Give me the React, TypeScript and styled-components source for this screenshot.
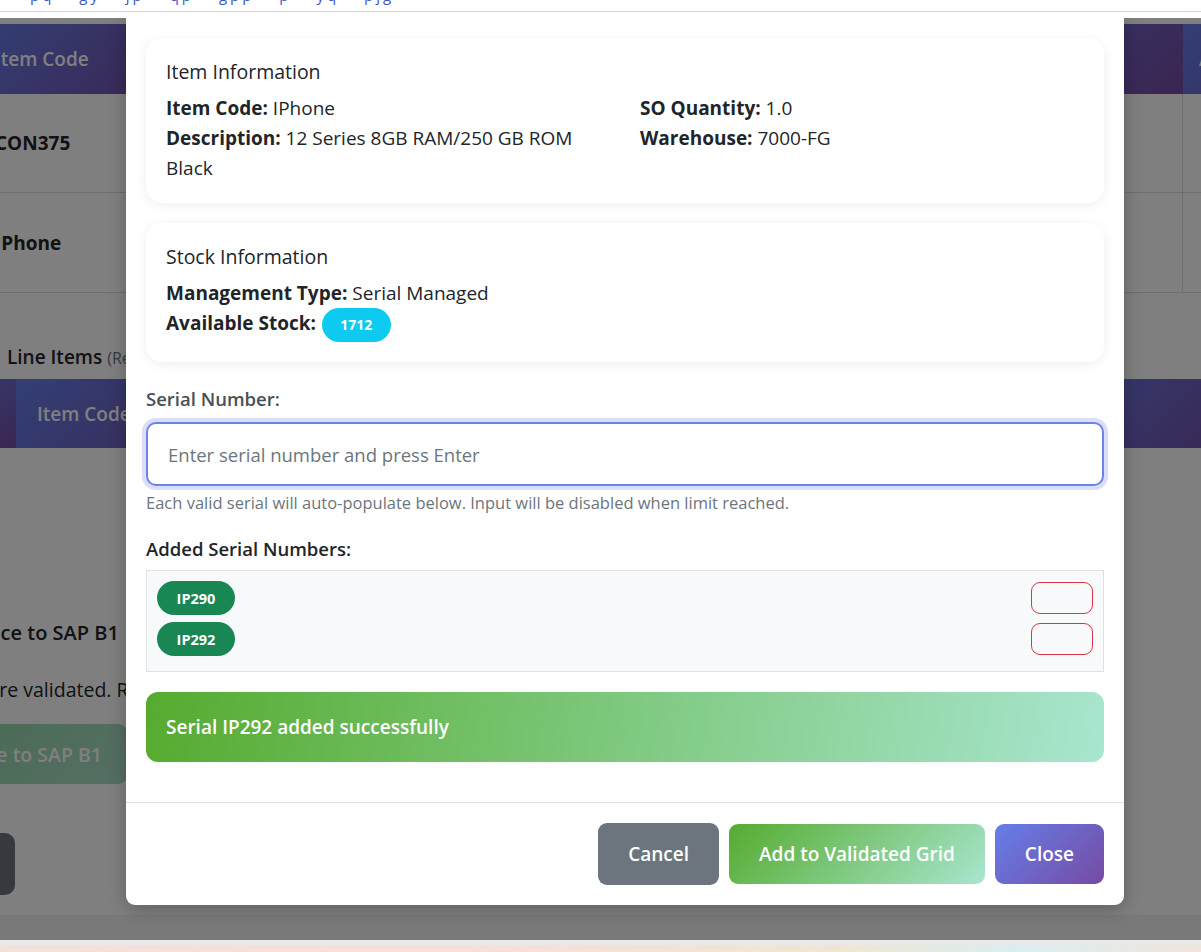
import React from 'react';
import styled, { createGlobalStyle } from 'styled-components';

const GlobalStyle = createGlobalStyle`
  html, body {
    margin: 0;
    padding: 0;
  }
  body {
    font-family: "Open Sans", "Noto Sans", "Liberation Sans", sans-serif;
    color: #212529;
    background: #fff;
    overflow: hidden;
  }
  * {
    box-sizing: border-box;
  }
`;

const Screen = styled.div`
  width: 1201px;
  height: 952px;
  display: flex;
  flex-direction: column;
  overflow: hidden;
`;

const BrowserBar = styled.div`
  flex: none;
  height: 18px;
  background: #fff;
`;

const BarTabs = styled.div`
  height: 12px;
  overflow: hidden;
  border-bottom: 1px solid #d4d4d4;
  padding-left: 30px;
  color: #3b57c4;
  font-size: 15px;
  line-height: 15px;
`;

const BarText = styled.div`
  margin-top: -12px;
  letter-spacing: 3px;
  word-spacing: 18px;
`;

const Viewport = styled.div`
  flex: none;
  height: 922px;
  position: relative;
  overflow: hidden;
  background: #fff;
`;

const Taskbar = styled.div`
  flex: 1;
  border-top: 5px solid #e9e9e9;
  background: linear-gradient(90deg, #f3e2d9, #f6e0da 40%, #efe6d2 70%, #d9eef0 85%, #f2e4dc);
`;

/* page behind the dialog */

const Page = styled.div`
  padding-top: 6px;
  height: 100%;
  display: flex;
  flex-direction: column;
`;

const Grid = styled.div<{ $cols: string; $shift: number }>`
  display: grid;
  grid-template-columns: ${p => p.$cols};
  margin-left: ${p => p.$shift}px;
  width: max-content;
`;

const HeadCell = styled.div<{ $h: number; $pad?: number }>`
  height: ${p => p.$h}px;
  background: linear-gradient(135deg, #667eea 0%, #764ba2 100%);
  color: #fff;
  font-size: 19px;
  font-weight: 600;
  display: flex;
  align-items: center;
  padding-left: ${p => p.$pad ?? 16}px;
  white-space: nowrap;
`;

const BodyCell = styled.div<{ $h: number }>`
  height: ${p => p.$h}px;
  border-bottom: 1px solid #dcdcdc;
  border-right: 1px solid #dcdcdc;
  display: flex;
  align-items: center;
  padding-left: 16px;
  font-size: 19px;
  font-weight: 700;
`;

const SectionTitle = styled.div`
  margin: 50px 0 7px 7px;
  font-size: 19px;
  font-weight: 600;
  line-height: 28px;
  white-space: nowrap;
`;

const Muted = styled.span`
  font-size: 16px;
  font-weight: 400;
  color: #6c757d;
`;

const EmptyBody = styled.div`
  height: 170px;
`;

const Submit = styled.div`
  margin-left: -94px;
  display: flex;
  flex-direction: column;
  align-items: flex-start;
`;

const SubmitTitle = styled.div`
  font-size: 20px;
  font-weight: 600;
  line-height: 30px;
  white-space: nowrap;
`;

const SubmitText = styled.div`
  margin-top: 27px;
  font-size: 19.5px;
  line-height: 30px;
  white-space: nowrap;
`;

const PageButton = styled.div<{ $tone: 'submit' | 'back' }>`
  margin-top: ${p => (p.$tone === 'submit' ? 19 : 49)}px;
  height: ${p => (p.$tone === 'submit' ? 60 : 62)}px;
  width: ${p => (p.$tone === 'submit' ? 222 : 109)}px;
  border-radius: 10px;
  display: flex;
  align-items: center;
  justify-content: flex-end;
  padding-right: 26px;
  font-size: 19.5px;
  font-weight: 600;
  color: #fff;
  white-space: nowrap;
  background: ${p =>
    p.$tone === 'submit'
      ? 'linear-gradient(135deg, #7dcf8f 0%, #9dd8c0 100%)'
      : '#6c757d'};
  opacity: ${p => (p.$tone === 'submit' ? 0.85 : 1)};
`;

const PageFooter = styled.div`
  margin-top: auto;
  height: 25px;
  background: #f3f3f3;
`;

const Backdrop = styled.div`
  position: absolute;
  inset: 0;
  background: rgba(0, 0, 0, 0.5);
`;

/* dialog */

const DialogLayer = styled.div`
  position: absolute;
  inset: 0;
  padding-left: 126px;
  display: flex;
  align-items: flex-start;
`;

const Dialog = styled.div`
  width: 998px;
  background: #fff;
  border-radius: 0 0 9px 9px;
  box-shadow: 0 4px 18px rgba(0, 0, 0, 0.25);
  display: flex;
  flex-direction: column;
`;

const DialogBody = styled.div`
  padding: 20px 20px 20px;
  display: flex;
  flex-direction: column;
`;

const Card = styled.div`
  background: #fff;
  border-radius: 16px;
  box-shadow: 0 2px 12px rgba(0, 0, 0, 0.07);
  padding: 20px;
  margin-bottom: 20px;
`;

const CardTitle = styled.div`
  font-size: 19.5px;
  font-weight: 500;
  line-height: 27px;
  margin-bottom: 8px;
`;

const InfoGrid = styled.div`
  display: grid;
  grid-template-columns: 440px 1fr;
  column-gap: 34px;
`;

const InfoLine = styled.div`
  font-size: 19px;
  line-height: 30px;
  min-height: 30px;
`;

const Label = styled.b`
  font-weight: 700;
`;

const Badge = styled.span`
  display: inline-flex;
  align-items: center;
  justify-content: center;
  width: 69px;
  height: 34px;
  border-radius: 17px;
  background: #0dcaf0;
  color: #fff;
  font-size: 14px;
  font-weight: 700;
  vertical-align: middle;
  margin-left: 1px;
`;

const FieldLabel = styled.div`
  font-size: 18.5px;
  font-weight: 600;
  line-height: 27px;
  color: #495057;
  margin: 3px 0 10px;
`;

const SectionLabel = styled(FieldLabel)`
  color: #212529;
  margin: 20px 0 8px;
`;

const SerialInput = styled.input`
  width: 100%;
  height: 64px;
  border: 2px solid #6f83e6;
  border-radius: 10px;
  box-shadow: 0 0 0 4px #d9defa;
  padding: 0 20px;
  font-family: inherit;
  font-size: 18.5px;
  color: #212529;
  outline: none;
  &::placeholder {
    color: #6c757d;
  }
`;

const HelpText = styled.div`
  margin-top: 5px;
  font-size: 16.5px;
  line-height: 24px;
  color: #6c757d;
`;

const SerialBox = styled.div`
  background: #f8f9fa;
  border: 1px solid #dee2e6;
  padding: 10px 10px 15px;
  display: flex;
  flex-direction: column;
  gap: 7px;
`;

const SerialRow = styled.div`
  display: flex;
  align-items: center;
  justify-content: space-between;
  height: 34px;
`;

const SerialChip = styled.span`
  display: inline-flex;
  align-items: center;
  justify-content: center;
  width: 78px;
  height: 34px;
  border-radius: 17px;
  background: #198754;
  color: #fff;
  font-size: 14.5px;
  font-weight: 700;
`;

const RemoveButton = styled.button`
  width: 62px;
  height: 32px;
  border: 1px solid #dc3545;
  border-radius: 9px;
  background: transparent;
  padding: 0;
`;

const SuccessAlert = styled.div`
  margin-top: 20px;
  margin-bottom: 20px;
  height: 70px;
  border-radius: 12px;
  background: linear-gradient(100deg, #56ab2f 0%, #a8e6cf 100%);
  color: #fff;
  font-size: 19px;
  font-weight: 600;
  display: flex;
  align-items: center;
  padding-left: 20px;
`;

const DialogFooter = styled.div`
  border-top: 1px solid #dee2e6;
  padding: 20px 20px 20px;
  display: flex;
  justify-content: flex-end;
  align-items: center;
  gap: 10px;
`;

const ActionButton = styled.button<{ $variant: 'secondary' | 'success' | 'primary' }>`
  height: ${p => (p.$variant === 'secondary' ? 62 : 60)}px;
  padding: 0 30px;
  border: none;
  border-radius: 9px;
  font-family: inherit;
  font-size: 19px;
  font-weight: 600;
  color: #fff;
  background: ${p =>
    p.$variant === 'secondary'
      ? '#6c757d'
      : p.$variant === 'success'
      ? 'linear-gradient(135deg, #56ab2f 0%, #a8e6cf 100%)'
      : 'linear-gradient(135deg, #667eea 0%, #764ba2 100%)'};
`;

const tableCols = '200px 250px 250px 250px 254px 200px';
const table2Cols = '60px 250px 250px 250px 250px 250px';

export default function App() {
  return (
    <Screen>
      <GlobalStyle />
      <BrowserBar>
        <BarTabs>
          <BarText>pq gy jp qp gpp p yq pjg</BarText>
        </BarTabs>
      </BrowserBar>

      <Viewport>
        <Page>
          <Grid $cols={tableCols} $shift={-21}>
            {['Item Code', 'Description', 'Quantity', 'Warehouse', 'Status', 'Action'].map(h => (
              <HeadCell key={h} $h={70}>{h}</HeadCell>
            ))}
            {['CON375', '', '', '', '', ''].map((c, i) => (
              <BodyCell key={'a' + i} $h={99}>{c}</BodyCell>
            ))}
            {['IPhone', '', '', '', '', ''].map((c, i) => (
              <BodyCell key={'b' + i} $h={100}>{c}</BodyCell>
            ))}
          </Grid>

          <SectionTitle>
            Line Items <Muted>(Ready)</Muted>
          </SectionTitle>

          <Grid $cols={table2Cols} $shift={-44}>
            {['#', 'Item Code', 'Description', 'Quantity', 'Serials', 'Action'].map(h => (
              <HeadCell key={h} $h={69} $pad={h === '#' ? 16 : 21}>{h}</HeadCell>
            ))}
          </Grid>
          <EmptyBody />

          <Submit>
            <SubmitTitle>Post Invoice to SAP B1</SubmitTitle>
            <SubmitText>All items are validated. Ready</SubmitText>
            <PageButton $tone="submit">Post Invoice to SAP B1</PageButton>
            <PageButton $tone="back">Back</PageButton>
          </Submit>

          <PageFooter />
        </Page>

        <Backdrop />

        <DialogLayer>
          <Dialog>
            <DialogBody>
              <Card>
                <CardTitle>Item Information</CardTitle>
                <InfoGrid>
                  <div>
                    <InfoLine><Label>Item Code:</Label> IPhone</InfoLine>
                    <InfoLine><Label>Description:</Label> 12 Series 8GB RAM/250 GB ROM Black</InfoLine>
                  </div>
                  <div>
                    <InfoLine><Label>SO Quantity:</Label> 1.0</InfoLine>
                    <InfoLine><Label>Warehouse:</Label> 7000-FG</InfoLine>
                  </div>
                </InfoGrid>
              </Card>

              <Card>
                <CardTitle>Stock Information</CardTitle>
                <InfoLine><Label>Management Type:</Label> Serial Managed</InfoLine>
                <InfoLine><Label>Available Stock:</Label> <Badge>1712</Badge></InfoLine>
              </Card>

              <FieldLabel>Serial Number:</FieldLabel>
              <SerialInput placeholder="Enter serial number and press Enter" />
              <HelpText>
                Each valid serial will auto-populate below. Input will be disabled when limit reached.
              </HelpText>

              <SectionLabel>Added Serial Numbers:</SectionLabel>
              <SerialBox>
                {['IP290', 'IP292'].map(s => (
                  <SerialRow key={s}>
                    <SerialChip>{s}</SerialChip>
                    <RemoveButton aria-label={`Remove ${s}`} />
                  </SerialRow>
                ))}
              </SerialBox>

              <SuccessAlert>Serial IP292 added successfully</SuccessAlert>
            </DialogBody>

            <DialogFooter>
              <ActionButton $variant="secondary">Cancel</ActionButton>
              <ActionButton $variant="success">Add to Validated Grid</ActionButton>
              <ActionButton $variant="primary">Close</ActionButton>
            </DialogFooter>
          </Dialog>
        </DialogLayer>
      </Viewport>

      <Taskbar />
    </Screen>
  );
}
